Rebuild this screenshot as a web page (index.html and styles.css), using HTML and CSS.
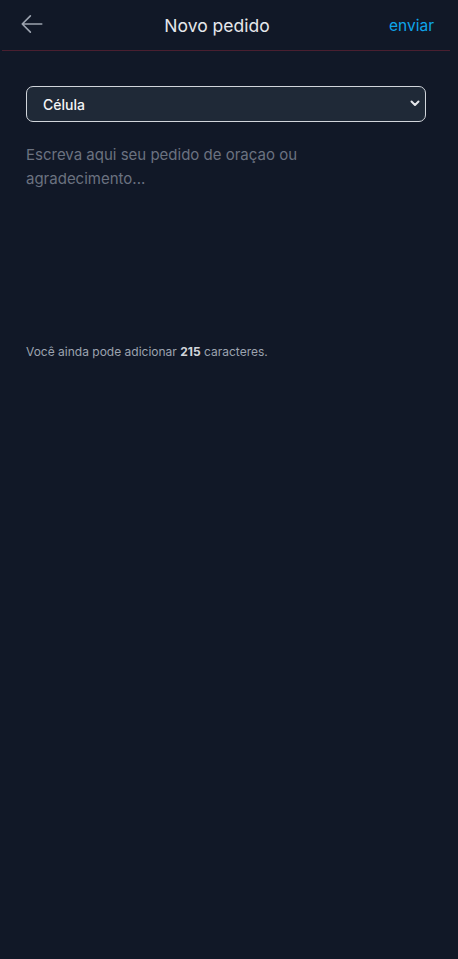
FILE: index.html
```html
<!DOCTYPE html>
<html lang="pt">
<head>
<meta charset="utf-8">
<link rel="stylesheet" href="styles.css">
</head>
<body>
<header class="topbar">
  <button class="back" aria-label="voltar">
    <svg width="26" height="26" viewBox="0 0 24 24" fill="none" stroke="currentColor" stroke-width="1.5" stroke-linecap="round" stroke-linejoin="round"><path d="M10.5 19.5 3 12m0 0 7.5-7.5M3 12h18"/></svg>
  </button>
  <h1 class="title">Novo pedido</h1>
  <a class="send">enviar</a>
</header>
<main class="content">
  <div class="select-wrap">
    <select class="select">
      <option>Célula</option>
    </select>
    <svg class="chev" width="10" height="7" viewBox="0 0 10 7" fill="none" stroke="currentColor" stroke-width="2" stroke-linecap="round" stroke-linejoin="round"><path d="M1.5 1.5 5 5l3.5-3.5"/></svg>
  </div>
  <textarea class="request" placeholder="Escreva aqui seu pedido de oraçao ou agradecimento..."></textarea>
  <p class="counter">Você ainda pode adicionar <b>215</b> caracteres.</p>
</main>
</body>
</html>
```
FILE: styles.css
```css
html, body {
  margin: 0;
  padding: 0;
  background: #111827;
  font-family: Inter, "Noto Sans", sans-serif;
  height: 100%;
}
.topbar {
  box-sizing: border-box;
  width: 448px;
  margin-left: 2px;
  height: 51px;
  display: flex;
  justify-content: space-between;
  align-items: center;
  border-bottom: 1px solid #4a1f30;
  padding: 0 16px 0 17px;
}
.back {
  background: none;
  border: 0;
  padding: 0;
  color: #9ca3af;
  display: flex;
  margin-top: -2px;
}
.title {
  margin: 0;
  font-size: 17.5px;
  font-weight: 400;
  color: #e5e7eb;
}
.send {
  color: #0ea5e9;
  font-size: 15.5px;
}
.content {
  padding: 35px 32px 0 26px;
  display: flex;
  flex-direction: column;
}
.select-wrap {
  position: relative;
  width: 400px;
}
.select {
  appearance: none;
  -webkit-appearance: none;
  box-sizing: border-box;
  width: 400px;
  height: 36px;
  background: #1f2937;
  border: 1px solid #d1d5db;
  border-radius: 7px;
  color: #f3f4f6;
  font-family: inherit;
  font-size: 14px;
  font-weight: 500;
  padding: 0 16px;
  outline: none;
}
.chev {
  position: absolute;
  right: 6px;
  top: 14px;
  color: #e5e7eb;
  pointer-events: none;
}
.request {
  box-sizing: border-box;
  width: 400px;
  height: 200px;
  margin-top: 21px;
  background: transparent;
  border: 0;
  padding: 0 20px 0 0;
  resize: none;
  font-family: inherit;
  font-size: 15px;
  line-height: 24px;
  color: #e5e7eb;
  outline: none;
}
.request::placeholder {
  color: #6b7280;
}
.counter {
  margin: 0;
  margin-top: 1px;
  font-size: 12px;
  color: #9ca3af;
}
.counter b {
  font-weight: 700;
  color: #d1d5db;
}
```
